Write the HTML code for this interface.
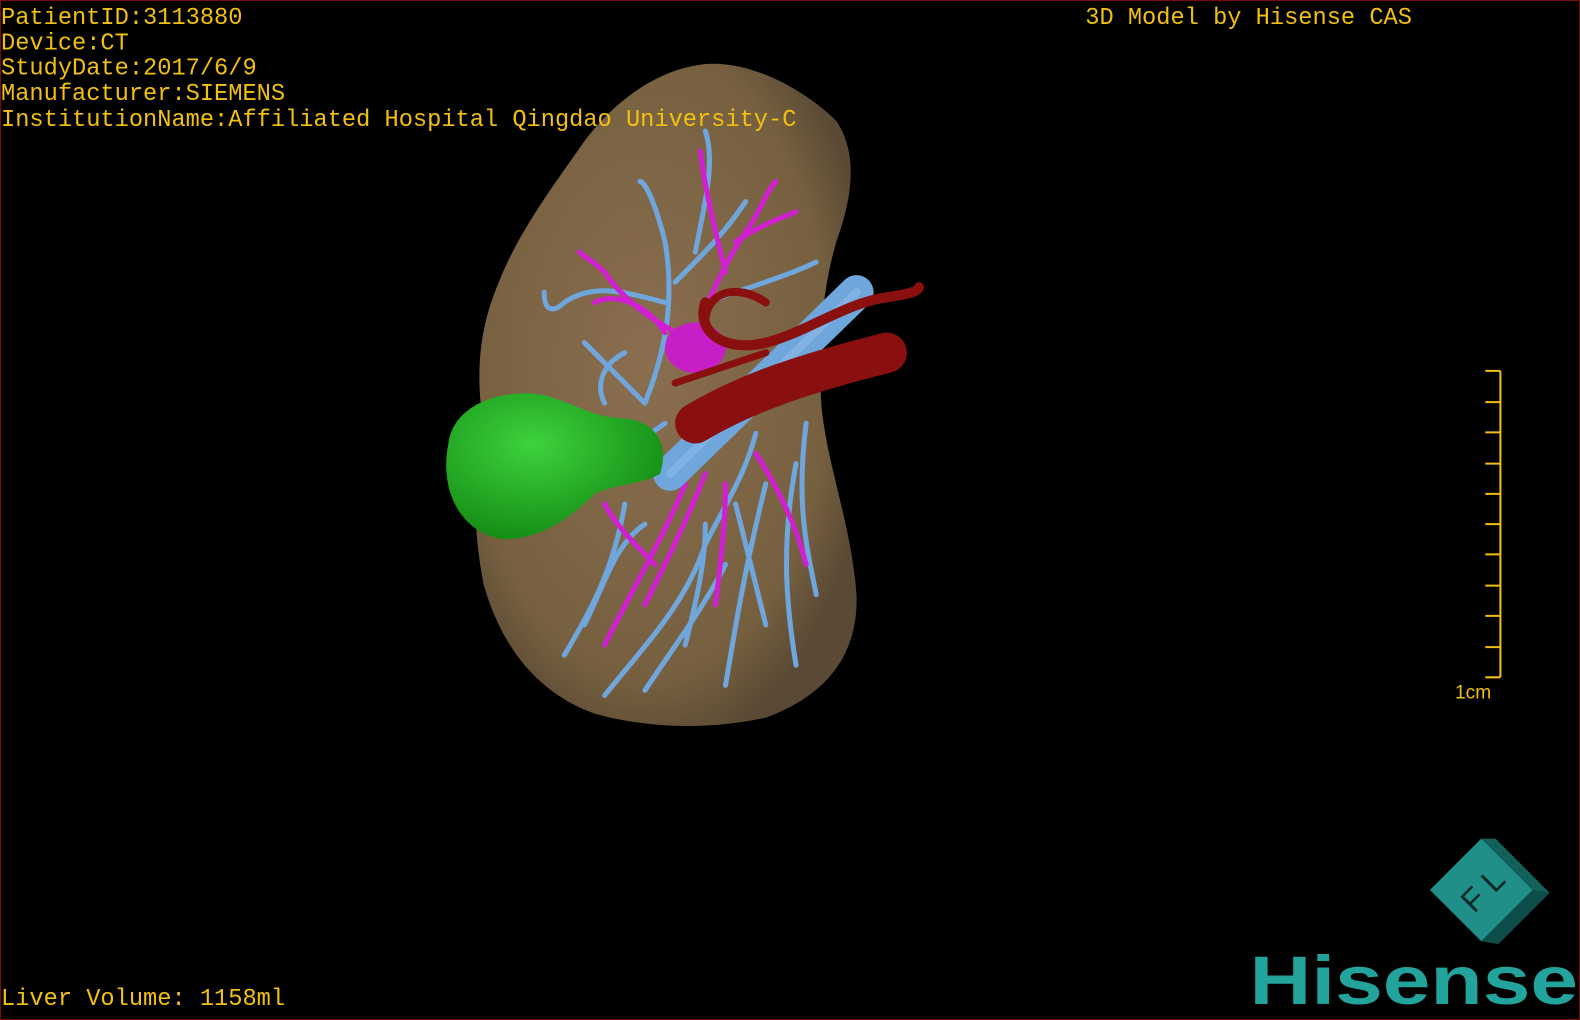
<!DOCTYPE html>
<html><head><meta charset="utf-8"><style>
html,body{margin:0;padding:0;background:#000;width:1580px;height:1020px;overflow:hidden}
svg{display:block}
</style></head><body>
<svg width="1580" height="1020" viewBox="0 0 1568 1012" preserveAspectRatio="none">
<defs>
<radialGradient id="lv" cx="0.45" cy="0.45" r="0.6"><stop offset="0" stop-color="#8a6e50"/><stop offset="0.8" stop-color="#76603f"/><stop offset="1" stop-color="#5a4a35"/></radialGradient>
<radialGradient id="gb" cx="0.4" cy="0.35" r="0.7"><stop offset="0" stop-color="#3ed23e"/><stop offset="1" stop-color="#128a12"/></radialGradient>
</defs>
<rect x="0" y="0" width="1568" height="1012" fill="#000" stroke="#7a0c0c" stroke-width="2"/>
<path d="M690 65 C740 55 800 90 830 120 C850 150 848 190 830 240 C815 290 812 350 815 400 C820 460 845 520 850 590 C852 650 820 690 760 712 C700 725 640 722 590 708 C540 690 500 650 480 580 C468 520 470 460 478 410 C472 360 478 320 495 280 C515 230 545 190 580 140 C610 100 650 72 690 65 Z" fill="url(#lv)"/>
<g fill="none" stroke="#6fa6dc" stroke-linecap="round" stroke-width="5">
<path d="M600 690 C640 640 680 600 700 540 C720 500 740 470 750 430"/>
<path d="M640 685 C670 640 700 600 720 560"/>
<path d="M560 650 C590 600 610 560 620 500"/>
<path d="M720 680 C730 620 740 560 760 480"/>
<path d="M790 660 C780 600 775 540 790 460"/>
<path d="M810 590 C800 540 790 500 800 420"/>
<path d="M580 620 C600 580 610 540 640 520"/>
<path d="M680 640 C690 600 700 560 700 520"/>
<path d="M760 620 C750 580 740 540 730 500"/>
<path d="M640 400 C660 350 670 300 660 240 C650 200 640 180 635 180"/>
<path d="M660 300 C620 290 590 280 560 300 C550 310 540 310 540 290"/>
<path d="M670 280 C700 250 720 230 740 200"/>
<path d="M690 250 C700 200 710 160 700 130"/>
<path d="M700 300 C760 280 790 270 810 260"/>
<path d="M640 400 C610 370 590 350 580 340"/>
<path d="M660 420 C630 440 600 470 585 490"/>
<path d="M620 350 C600 360 590 380 600 400"/>
</g>
<g fill="none" stroke="#d21fd2" stroke-linecap="round" stroke-width="5">
<path d="M600 640 C630 580 660 530 680 480"/>
<path d="M640 600 C660 560 680 520 700 470"/>
<path d="M710 600 C715 560 720 520 720 480"/>
<path d="M800 560 C790 520 770 480 750 450"/>
<path d="M650 560 C630 540 610 520 600 500"/>
<path d="M690 340 C700 300 720 260 740 230 C755 210 760 190 770 180"/>
<path d="M720 270 C710 230 700 190 695 150"/>
<path d="M690 340 C650 320 620 300 600 270 C590 260 580 255 575 250"/>
<path d="M660 330 C640 300 610 290 590 300"/>
<path d="M730 240 C760 220 780 215 790 210"/>
</g>
<ellipse cx="690" cy="345" rx="30" ry="25" fill="#c81ec8"/>
<path d="M665 470 L850 290" stroke="#6fa6dc" stroke-width="34" stroke-linecap="round"/>
<path d="M665 470 L850 290" stroke="#8cbcea" stroke-width="8" stroke-linecap="round" opacity="0.6"/>
<g fill="none" stroke="#8a1010" stroke-linecap="round">
<path d="M690 420 C740 390 800 370 880 350" stroke-width="40"/>
<path d="M700 300 C690 330 720 350 760 340 C800 330 840 300 880 295 C900 292 910 290 912 285" stroke-width="10"/>
<path d="M700 320 C700 290 730 280 760 300" stroke-width="8"/>
<path d="M670 380 C700 370 730 360 760 350" stroke-width="7"/>
</g>
<path d="M445 440 C450 400 500 385 540 392 C570 400 590 415 620 415 C650 418 665 440 655 470 C640 480 610 480 590 490 C570 510 540 535 500 535 C460 530 435 490 445 440 Z" fill="url(#gb)"/>
<g style="font-family:'Liberation Mono',monospace" fill="#f2c010" font-size="23.5">
<text xml:space="preserve"><tspan x="1" y="24">PatientID:3113880</tspan><tspan x="1" y="49">Device:CT</tspan><tspan x="1" y="74">StudyDate:2017/6/9</tspan><tspan x="1" y="99">Manufacturer:SIEMENS</tspan><tspan x="1" y="125">InstitutionName:Affiliated Hospital Qingdao University-C</tspan></text>
<text x="1077" y="24">3D Model by Hisense CAS</text>
<text x="1" y="997">Liver Volume: 1158ml</text>
</g>
<g stroke="#f2c010" stroke-width="2"><path d="M1489 368 V672"/>
<path d="M1474 368H1489M1474 399H1489M1474 429H1489M1474 460H1489M1474 490H1489M1474 520H1489M1474 550H1489M1474 581H1489M1474 611H1489M1474 642H1489M1474 672H1489"/></g>
<text x="1444" y="693" font-size="19" fill="#f2c010" style="font-family:'Liberation Sans',sans-serif">1cm</text>
<g transform="translate(1470 883) rotate(-45)">
<path d="M-36 36 L-26 50 L46 50 L36 36 Z" fill="#0e4e4a"/>
<path d="M36 -36 L46 -26 L46 50 L36 36 Z" fill="#13605a"/>
<rect x="-36" y="-36" width="72" height="72" fill="#1f8f88"/>
<text x="-22" y="12" font-size="32" fill="#0a2a28" style="font-family:'Liberation Sans',sans-serif">F L</text>
</g>
<text x="1240" y="996" font-size="68" font-weight="bold" fill="#22a49c" style="font-family:'Liberation Sans',sans-serif" textLength="326" lengthAdjust="spacingAndGlyphs">Hisense</text>
</svg>
</body></html>
